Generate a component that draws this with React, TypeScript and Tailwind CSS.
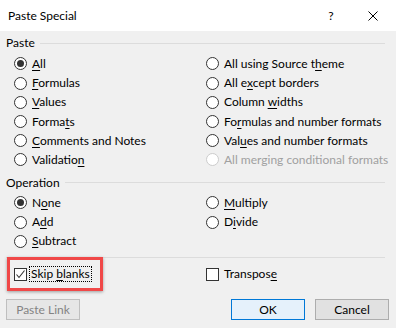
import React from "react";

const FONT = { fontFamily: 'Lato, "Segoe UI", sans-serif' };

function U({ children }: { children: React.ReactNode }) {
  return <span className="underline underline-offset-[2px] decoration-[1px]">{children}</span>;
}

function Radio({ checked, disabled, children }: { checked?: boolean; disabled?: boolean; children: React.ReactNode }) {
  return (
    <div className="flex items-center h-[19.2px]">
      <div
        className={
          "w-[13px] h-[13px] rounded-full border bg-white flex items-center justify-center shrink-0 " +
          (disabled ? "border-[#cccccc]" : "border-[#333333]")
        }
      >
        {checked && <div className="w-[7px] h-[7px] rounded-full bg-[#333333]" />}
      </div>
      <span
        className={
          "ml-[5px] text-[12px] leading-none whitespace-nowrap " + (disabled ? "text-[#a0a0a0]" : "text-black")
        }
      >
        {children}
      </span>
    </div>
  );
}

function Header({ label }: { label: string }) {
  return (
    <div className="flex items-center h-[20px]">
      <span className="text-[12px] leading-none text-black">{label}</span>
      <div className="flex-1 h-px bg-[#dcdcdc] ml-[5px]" />
    </div>
  );
}

export default function App() {
  return (
    <div style={FONT} className="w-[396px] h-[328px] bg-[#f0f0f0] relative overflow-hidden select-none">
      {/* Title bar */}
      <div className="h-[31px] bg-white flex items-center pl-[8px] pr-[18px]">
        <span className="text-[12px] text-black flex-1">Paste Special</span>
        <span className="text-[12px] text-black w-[10px] text-center">?</span>
        <svg className="ml-[32px]" width="10" height="10" viewBox="0 0 10 10">
          <path d="M0.5 0.5 L9.5 9.5 M9.5 0.5 L0.5 9.5" stroke="#000" strokeWidth="1" />
        </svg>
      </div>

      <div className="pl-[6px] pr-[11px] pt-[2px]">
        <Header label="Paste" />
        <div className="grid grid-cols-[192px_1fr] pl-[8px] mt-[1.4px]">
          <div>
            <Radio checked><U>A</U>ll</Radio>
            <Radio><U>F</U>ormulas</Radio>
            <Radio><U>V</U>alues</Radio>
            <Radio>Forma<U>t</U>s</Radio>
            <Radio><U>C</U>omments and Notes</Radio>
            <Radio>Validatio<U>n</U></Radio>
          </div>
          <div>
            <Radio>All using Source t<U>h</U>eme</Radio>
            <Radio>All e<U>x</U>cept borders</Radio>
            <Radio>Column <U>w</U>idths</Radio>
            <Radio>Fo<U>r</U>mulas and number formats</Radio>
            <Radio>Val<U>u</U>es and number formats</Radio>
            <Radio disabled>All merging conditional formats</Radio>
          </div>
        </div>

        <div className="mt-[3.4px]">
          <Header label="Operation" />
        </div>
        <div className="grid grid-cols-[192px_1fr] pl-[8px] mt-[0.4px]">
          <div>
            <Radio checked>N<U>o</U>ne</Radio>
            <Radio>A<U>d</U>d</Radio>
            <Radio><U>S</U>ubtract</Radio>
          </div>
          <div>
            <Radio><U>M</U>ultiply</Radio>
            <Radio>D<U>i</U>vide</Radio>
          </div>
        </div>

        <div className="h-px bg-[#dcdcdc] mt-[6.6px]" />

        <div className="grid grid-cols-[192px_1fr] pl-[8px] mt-[8px] h-[16px] items-center">
          <div className="flex items-center">
            <div className="w-[13px] h-[13px] border border-[#333333] bg-white flex items-center justify-center shrink-0">
              <svg width="11" height="11" viewBox="0 0 11 11">
                <path d="M1.5 5.5 L4 8.5 L9.5 1.5" stroke="#333" strokeWidth="1.1" fill="none" />
              </svg>
            </div>
            <div className="ml-[2px] px-[1px] h-[16px] flex items-center border border-dotted border-black">
              <span className="text-[12px] leading-none text-black whitespace-nowrap">
                Skip <U>b</U>lanks
              </span>
            </div>
          </div>
          <div className="flex items-center">
            <div className="w-[13px] h-[13px] border border-[#333333] bg-white shrink-0" />
            <span className="ml-[5px] text-[12px] leading-none text-black whitespace-nowrap">
              Transpos<U>e</U>
            </span>
          </div>
        </div>
      </div>

      <div className="flex items-center pl-[6px] pr-[7px] mt-[17px]">
        <div className="w-[74px] h-[21px] border border-[#bfbfbf] bg-[#e6e6e6] flex items-center justify-center text-[12px] text-[#838383]">
          Paste Link
        </div>
        <div className="flex-1" />
        <div className="w-[74px] h-[21px] border border-[#0078d7] bg-[#e5f1fb] flex items-center justify-center text-[12px] text-black">
          OK
        </div>
        <div className="w-[74px] h-[21px] ml-[10px] border border-[#adadad] bg-[#e1e1e1] flex items-center justify-center text-[12px] text-black">
          Cancel
        </div>
      </div>

      {/* Highlight annotation */}
      <div className="absolute left-[7px] top-[257px] w-[96px] h-[34px] border-[3px] border-[#f04848] shadow-[0_1px_3px_rgba(0,0,0,0.35)]" />
    </div>
  );
}
